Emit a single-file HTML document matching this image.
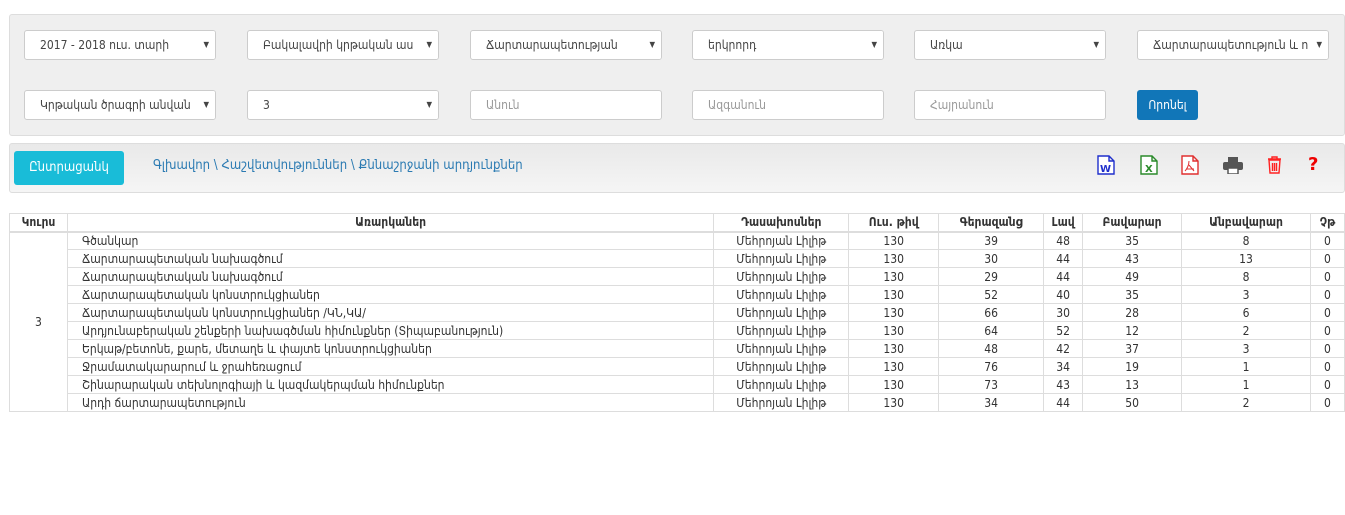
<!DOCTYPE html>
<html><head><meta charset="utf-8"><style>
*{box-sizing:border-box;margin:0;padding:0}
body{width:1345px;height:515px;background:#fff;font-family:"DejaVu Sans Condensed","DejaVu Sans",sans-serif;font-size:12px;color:#333;position:relative;overflow:hidden}
.p1{position:absolute;left:9px;top:14px;width:1336px;height:122px;background:#efefef;border:1px solid #ddd;border-radius:3px}
.f{position:absolute;width:192px;height:30px;background:#fff;border:1px solid #ccc;border-radius:3px;padding:7px 0 0 15px;font-size:12px;color:#444;white-space:nowrap;overflow:hidden}
.f.s::after{content:"▼";position:absolute;right:0;top:0;height:28px;padding:10px 6px 0 6px;font-size:8px;line-height:8px;color:#444;background:#fff}
.f.ph{color:#999}
.btn{position:absolute;left:1137px;top:90px;width:61px;height:30px;background:#1176b8;border-radius:3px;color:#fff;text-align:center;padding-top:8px}
.p2{position:absolute;left:9px;top:143px;width:1336px;height:50px;background:linear-gradient(#e9e9e9,#f5f5f5);border:1px solid #ddd;border-radius:3px}
.b2{position:absolute;left:14px;top:151px;width:110px;height:34px;background:#19bcd8;border-radius:3px;color:#fff;text-align:center;padding-top:9px;font-size:13px}
.bc{position:absolute;left:153px;top:158px;color:#2a7ab2;font-size:13px}
.ic{position:absolute;top:155px}
table{position:absolute;left:9px;top:213px;width:1336px;border-collapse:collapse;font-size:12px}
td,th{border:1px solid #ddd;height:18px;padding:0 4px;line-height:16px;text-align:center;font-weight:normal;color:#333}
th{font-weight:bold;border-bottom:2px solid #ddd}
td.l{text-align:left;padding-left:14px}
</style></head><body>
<div class="p1"></div>
<div class="f s" style="left:24px;top:30px">2017 - 2018 ուս. տարի</div>
<div class="f s" style="left:247px;top:30px">Բակալավրի կրթական աս</div>
<div class="f s" style="left:470px;top:30px">Ճարտարապետության</div>
<div class="f s" style="left:692px;top:30px">երկրորդ</div>
<div class="f s" style="left:914px;top:30px">Առկա</div>
<div class="f s" style="left:1137px;top:30px">Ճարտարապետություն և ո</div>
<div class="f s" style="left:24px;top:90px">Կրթական ծրագրի անվան</div>
<div class="f s" style="left:247px;top:90px">3</div>
<div class="f ph" style="left:470px;top:90px">Անուն</div>
<div class="f ph" style="left:692px;top:90px">Ազգանուն</div>
<div class="f ph" style="left:914px;top:90px">Հայրանուն</div>
<div class="btn">Որոնել</div>
<div class="p2"></div>
<div class="b2">Ընտրացանկ</div>
<div class="bc">Գլխավոր \ Հաշվետվություններ \ Քննաշրջանի արդյունքներ</div>
<svg class="ic" style="left:1097px" width="18" height="20" viewBox="0 0 18 20"><path d="M1 1h11l5 5v13H1z M12 1v5h5" fill="#fff" stroke="#1f2fcc" stroke-width="1.4"/><text x="3" y="17" font-size="10" font-weight="bold" fill="#1f2fcc" font-family="DejaVu Sans">W</text></svg>
<svg class="ic" style="left:1140px" width="18" height="20" viewBox="0 0 18 20"><path d="M1 1h11l5 5v13H1z M12 1v5h5" fill="#fff" stroke="#2a8a2a" stroke-width="1.4"/><text x="5" y="17" font-size="10" font-weight="bold" fill="#2a8a2a" font-family="DejaVu Sans">X</text></svg>
<svg class="ic" style="left:1181px" width="18" height="20" viewBox="0 0 18 20"><path d="M1 1h11l5 5v13H1z M12 1v5h5" fill="#fff" stroke="#e03030" stroke-width="1.4"/><path d="M8 6c0 4-2 8-4 10M8 10l5 6M5 14h8" fill="none" stroke="#e03030" stroke-width="1"/></svg>
<svg class="ic" style="left:1223px;top:157px" width="20" height="17" viewBox="0 0 20 17"><rect x="5" y="0" width="10" height="5" fill="#555"/><rect x="0" y="5" width="20" height="8" rx="2" fill="#555"/><rect x="5" y="11" width="10" height="6" fill="#fff" stroke="#555" stroke-width="1.5"/></svg>
<svg class="ic" style="left:1267px;top:156px" width="15" height="18" viewBox="0 0 15 18"><path d="M1 3h13M5 3V1h5v2M2 4h11l-1 13H3z M5.5 7v8M7.5 7v8M9.5 7v8" fill="none" stroke="#f22" stroke-width="1.4"/></svg>
<div style="position:absolute;left:1308px;top:154px;color:#e00;font-weight:bold;font-size:18px;font-family:'DejaVu Sans',sans-serif">?</div>
<table>
<colgroup><col style="width:58px"><col style="width:647px"><col style="width:135px"><col style="width:90px"><col style="width:105px"><col style="width:39px"><col style="width:99px"><col style="width:129px"><col style="width:34px"></colgroup>
<tr><th>Կուրս</th><th>Առարկաներ</th><th>Դասախոսներ</th><th>Ուս. թիվ</th><th>Գերազանց</th><th>Լավ</th><th>Բավարար</th><th>Անբավարար</th><th>Չթ</th></tr>
<tr><td rowspan="10">3</td><td class="l">Գծանկար</td><td>Մեհրոյան Լիլիթ</td><td>130</td><td>39</td><td>48</td><td>35</td><td>8</td><td>0</td></tr>
<tr><td class="l">Ճարտարապետական նախագծում</td><td>Մեհրոյան Լիլիթ</td><td>130</td><td>30</td><td>44</td><td>43</td><td>13</td><td>0</td></tr>
<tr><td class="l">Ճարտարապետական նախագծում</td><td>Մեհրոյան Լիլիթ</td><td>130</td><td>29</td><td>44</td><td>49</td><td>8</td><td>0</td></tr>
<tr><td class="l">Ճարտարապետական կոնստրուկցիաներ</td><td>Մեհրոյան Լիլիթ</td><td>130</td><td>52</td><td>40</td><td>35</td><td>3</td><td>0</td></tr>
<tr><td class="l">Ճարտարապետական կոնստրուկցիաներ /ԿՆ,ԿԱ/</td><td>Մեհրոյան Լիլիթ</td><td>130</td><td>66</td><td>30</td><td>28</td><td>6</td><td>0</td></tr>
<tr><td class="l">Արդյունաբերական շենքերի նախագծման հիմունքներ (Տիպաբանություն)</td><td>Մեհրոյան Լիլիթ</td><td>130</td><td>64</td><td>52</td><td>12</td><td>2</td><td>0</td></tr>
<tr><td class="l">Երկաթ/բետոնե, քարե, մետաղե և փայտե կոնստրուկցիաներ</td><td>Մեհրոյան Լիլիթ</td><td>130</td><td>48</td><td>42</td><td>37</td><td>3</td><td>0</td></tr>
<tr><td class="l">Ջրամատակարարում և ջրահեռացում</td><td>Մեհրոյան Լիլիթ</td><td>130</td><td>76</td><td>34</td><td>19</td><td>1</td><td>0</td></tr>
<tr><td class="l">Շինարարական տեխնոլոգիայի և կազմակերպման հիմունքներ</td><td>Մեհրոյան Լիլիթ</td><td>130</td><td>73</td><td>43</td><td>13</td><td>1</td><td>0</td></tr>
<tr><td class="l">Արդի ճարտարապետություն</td><td>Մեհրոյան Լիլիթ</td><td>130</td><td>34</td><td>44</td><td>50</td><td>2</td><td>0</td></tr>
</table>
</body></html>
